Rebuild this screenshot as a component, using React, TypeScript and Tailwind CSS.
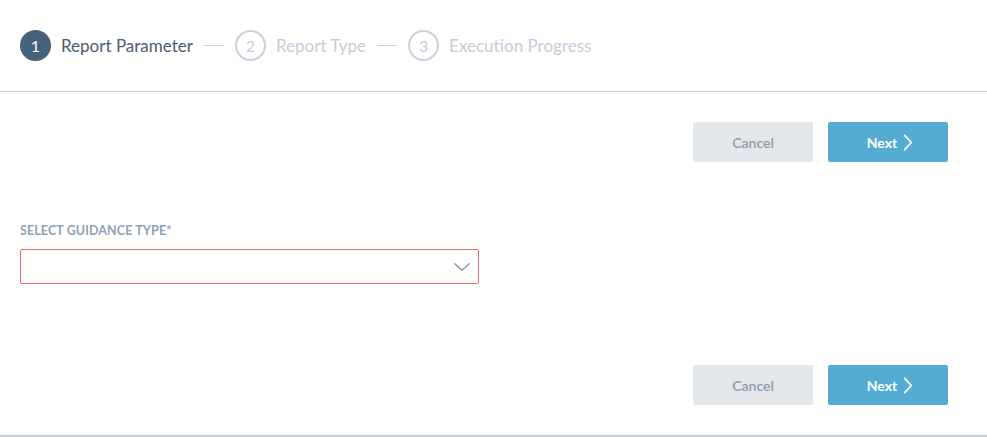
import React from "react";

function Step({ n, label, active }: { n: number; label: string; active?: boolean }) {
  return (
    <div className="flex items-center">
      {active ? (
        <div className="flex h-[31px] w-[31px] items-center justify-center rounded-full bg-[#46627a] text-[16px] text-white">
          {n}
        </div>
      ) : (
        <div className="flex h-[31px] w-[31px] items-center justify-center rounded-full border-2 border-[#c8d2dd] text-[16px] text-[#c3ceda]">
          {n}
        </div>
      )}
      <span className={`ml-[10px] text-[17px] ${active ? "text-[#4b5d6e]" : "text-[#c3ceda]"}`}>{label}</span>
    </div>
  );
}

function Dash() {
  return <div className="mx-[11px] h-px w-[20px] bg-[#c8d2dd]" />;
}

function Chevron({ className }: { className?: string }) {
  return (
    <svg viewBox="0 0 10 18" className={className} fill="none" stroke="currentColor" strokeWidth="1.8" strokeLinecap="round" strokeLinejoin="round">
      <path d="M1.5 1.5 L8.5 9 L1.5 16.5" />
    </svg>
  );
}

function Buttons() {
  return (
    <div className="flex justify-end gap-[15px] pr-[39px]">
      <button className="h-[40px] w-[120px] rounded-[2px] bg-[#e4e7eb] text-[14px] font-semibold text-[#8b9cad]">Cancel</button>
      <button className="flex h-[40px] w-[120px] items-center justify-center gap-[6px] rounded-[2px] bg-[#55acd3] pl-[4px] text-[14px] font-bold text-white">
        Next
        <Chevron className="h-[17px] w-[10px]" />
      </button>
    </div>
  );
}

export default function App() {
  return (
    <div className="flex h-[437px] w-full flex-col bg-white" style={{ fontFamily: "Lato, 'Noto Sans', sans-serif" }}>
      <div className="flex h-[92px] shrink-0 items-center border-b border-[#c9d0d6] pl-[20px]">
        <Step n={1} label="Report Parameter" active />
        <Dash />
        <Step n={2} label="Report Type" />
        <Dash />
        <Step n={3} label="Execution Progress" />
      </div>
      <div className="flex flex-1 flex-col border-b-2 border-[#c9cdd1]">
        <div className="pt-[30px]">
          <Buttons />
        </div>
        <div className="mt-[61px] pl-[20px]">
          <div className="text-[12.5px] font-bold uppercase leading-[16px] tracking-[0.1px] text-[#8da2b5]">Select Guidance Type*</div>
          <div className="mt-[10px] flex h-[35px] w-[459px] items-center justify-end rounded-[2px] border border-[#ec6b6b] pr-[8px]">
            <svg viewBox="0 0 16 8" className="h-[8px] w-[16px] text-[#8497a9]" fill="none" stroke="currentColor" strokeWidth="1.3" strokeLinecap="round" strokeLinejoin="round">
              <path d="M0.8 0.8 L8 7.2 L15.2 0.8" />
            </svg>
          </div>
        </div>
        <div className="mt-[81px]">
          <Buttons />
        </div>
      </div>
    </div>
  );
}
